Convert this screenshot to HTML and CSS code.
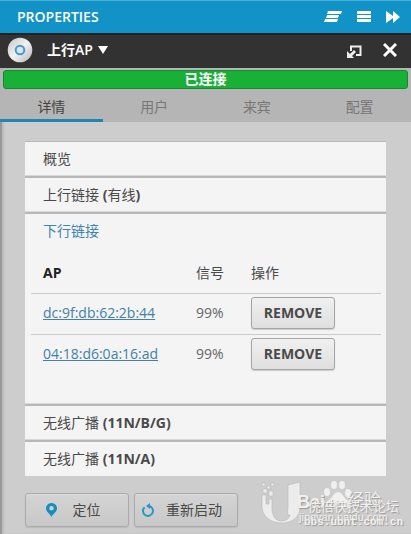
FILE: index.html
```html
<!DOCTYPE html>
<html lang="zh-CN">
<head>
  <meta charset="UTF-8">
  <meta name="viewport" content="width=device-width, initial-scale=1">
  <title>Properties</title>
  <link rel="stylesheet" href="styles.css">
</head>
<body>
  <header class="topbar">
    <h1>PROPERTIES</h1>
    <div class="tools">
      <button type="button" aria-label="Collapse">
        <svg width="18" height="12" viewBox="0 0 18 12"><path d="M4 0h14l-1 3H3zM3 4h12l-1 3H2zM1 8h13l-1 3H0z"/></svg>
      </button>
      <button type="button" aria-label="List">
        <svg width="14" height="12" viewBox="0 0 14 12"><path d="M0 0h14v3H0zM0 4h14v3H0zM0 8h14v3H0z"/></svg>
      </button>
      <button type="button" aria-label="Hide">
        <svg width="14" height="12" viewBox="0 0 14 12"><path d="M0 0l7 5V0l7 6-7 6V7l-7 5z"/></svg>
      </button>
    </div>
  </header>

  <div class="device">
    <svg class="device-icon" width="26" height="26" viewBox="0 0 26 26">
      <defs>
        <linearGradient id="disc" x1="0" y1="0" x2="1" y2="1">
          <stop offset="0" stop-color="#c4c4c4"/>
          <stop offset=".5" stop-color="#f2f2f2"/>
          <stop offset="1" stop-color="#b4b4b4"/>
        </linearGradient>
      </defs>
      <circle cx="13" cy="13" r="12.3" fill="url(#disc)"/>
      <circle cx="13" cy="13" r="4.300" fill="#d4e8f4" stroke="#4a98cc" stroke-width="2"/>
    </svg>
    <button type="button" class="device-name">上行AP
      <svg width="10" height="8" viewBox="0 0 10 8"><path d="M0 0h10L5 8z"/></svg>
    </button>
    <div class="window-tools">
      <button type="button" aria-label="Detach">
        <svg width="15" height="18" viewBox="0 0 15 18"><path d="M4 10V5.500h9.500v8.500H9" fill="none" stroke="#eee" stroke-width="2"/><path d="M0 10v7h7l-2-2 4-4-2-2-4 4z" fill="#eee"/></svg>
      </button>
      <button type="button" aria-label="Close">
        <svg width="14" height="14" viewBox="0 0 14 14"><path d="M1 1l12 12M13 1L1 13" stroke="#fff" stroke-width="3"/></svg>
      </button>
    </div>
  </div>

  <main class="panel">
    <div class="panel-head">
      <div class="status">已连接</div>
      <nav class="tabs">
        <a href="#details" class="active">详情</a>
        <a href="#users">用户</a>
        <a href="#guests">来宾</a>
        <a href="#config">配置</a>
      </nav>
    </div>

    <div class="content">
      <div class="accordion">
        <section><button type="button" class="toggle">概览</button></section>
        <section><button type="button" class="toggle">上行链接 <b>(</b>有线<b>)</b></button></section>
        <section>
          <button type="button" class="toggle open">下行链接</button>
          <div class="downlinks">
            <table>
              <thead>
                <tr><th class="ap">AP</th><th class="signal">信号</th><th>操作</th></tr>
              </thead>
              <tbody>
                <tr>
                  <td><a href="#ap1">dc:9f:db:62:2b:44</a></td>
                  <td>99%</td>
                  <td><button type="button" class="remove">REMOVE</button></td>
                </tr>
                <tr>
                  <td><a href="#ap2">04:18:d6:0a:16:ad</a></td>
                  <td>99%</td>
                  <td><button type="button" class="remove">REMOVE</button></td>
                </tr>
              </tbody>
            </table>
          </div>
        </section>
        <section><button type="button" class="toggle">无线广播 <b>(11N/B/G)</b></button></section>
        <section><button type="button" class="toggle">无线广播 <b>(11N/A)</b></button></section>
      </div>

      <div class="actions">
        <button type="button">
          <svg width="11" height="14" viewBox="0 0 11 14"><path d="M5.500 0A5.300 5.300 0 0 0 0 5.300C0 9 4 11 5.500 14 7 11 11 9 11 5.300A5.300 5.300 0 0 0 5.500 0zm0 3a2.200 2.200 0 1 1 0 4.400 2.200 2.200 0 0 1 0-4.400z" fill="#178dbd" fill-rule="evenodd"/></svg>
          <span>定位</span>
        </button>
        <button type="button">
          <svg width="13" height="14" viewBox="0 0 13 14"><path d="M2.600 4.200A5 5 0 1 0 7 3" fill="none" stroke="#2d97c4" stroke-width="2"/><path d="M8 0v6L4 3z" fill="#2d97c4"/></svg>
          <span>重新启动</span>
        </button>
      </div>
    </div>
  </main>

  <div class="watermark">
    <svg width="128" height="44" viewBox="0 0 128 44">
      <g fill="#ececec" stroke="#b0b0b0" stroke-width=".5">
        <path d="M1 14h4v9h3v-5h3v9c0 7 3 13 9 13 5 0 8-2 9-6-4 1-2-5-2-8V4l12-3v25c0 10-8 16-18 16C8 42 1 34 1 25z"/>
        <path d="M1 2h3v3H1zM6 5h3v3H6zM10 2h3v3h-3zM2 8h4v4H2zM8 10h4v5H8z"/>
      </g>
      <g fill="#f0f0f0">
        <ellipse cx="66" cy="11" rx="3" ry="4"/>
        <ellipse cx="73" cy="4" rx="3" ry="4"/>
        <ellipse cx="81" cy="4" rx="3" ry="4"/>
        <ellipse cx="87" cy="12" rx="3" ry="4"/>
        <path d="M77 11c-4 0-5 5-9 8-4 4-2 9 3 9h13c5 0 6-5 2-9-4-3-5-8-9-8z"/>
      </g>
    </svg>
    <span class="brand">Bai<i>du</i></span>
    <span class="brand-cn">经验</span>
    <span class="brand-url">jingyan.baidu.com</span>
    <span class="forum">优倍快技术论坛</span>
    <span class="forum-url">bbs.ubnt.com.cn</span>
  </div>
</body>
</html>
```
FILE: styles.css
```css
* {
  box-sizing: border-box;
}

body {
  margin: 0;
  min-height: 100vh;
  display: flex;
  flex-direction: column;
  position: relative;
  overflow: hidden;
  font-family: "Open Sans", "Noto Sans CJK SC", sans-serif;
  font-size: 14px;
  line-height: 20px;
  color: #4a4a4a;
  background: #cdcdcd;
}

button {
  font: inherit;
  color: inherit;
  background: none;
  border: 0;
  padding: 0;
  cursor: pointer;
}

svg {
  display: block;
}

/* header */
.topbar {
  display: flex;
  align-items: center;
  justify-content: space-between;
  height: 33px;
  padding: 0 11px 0 17px;
  background: #1193c7;
  border-top: 1px solid #4ab0d8;
}

.topbar h1 {
  margin: 0;
  font-size: 14px;
  font-weight: 600;
  color: #fff;
}

.tools {
  display: flex;
  gap: 15px;
}

.tools svg {
  fill: #fff;
}

.device {
  display: flex;
  align-items: center;
  height: 35px;
  padding: 0 14px 4px 7px;
  background: #323232;
  border-top: 2px solid #222;
}

.device-name {
  display: flex;
  align-items: center;
  gap: 5px;
  margin-left: 14px;
  font-weight: 600;
  color: #fff;
}

.device-name svg {
  fill: #fff;
}

.window-tools {
  display: flex;
  align-items: center;
  gap: 21px;
  margin-left: auto;
}

/* panel */
.panel {
  flex: 1;
  border-left: 2px solid #999;
  box-shadow: inset 2px 0 2px #bbb;
}

.panel-head {
  margin-left: -2px;
  padding-top: 2px;
  background: #b5b5b5;
}

.status {
  height: 19px;
  margin: 0 3px;
  border: 1px solid #168b2f;
  border-radius: 3px;
  background: #18b037;
  color: #fff;
  font-weight: 600;
  line-height: 16px;
  text-align: center;
}

.tabs {
  display: grid;
  grid-template-columns: repeat(4, 1fr);
}

.tabs a {
  height: 33px;
  line-height: 35px;
  border-bottom: 3px solid transparent;
  text-align: center;
  text-decoration: none;
  color: #777;
}

.tabs .active {
  color: #444;
  border-color: #2385b5;
}

.content {
  padding: 19px 25px 6px 23px;
}

.accordion {
  display: flex;
  flex-direction: column;
  gap: 2px;
  background: #b8b8b8;
  border-top: 1px solid #b8b8b8;
}

.accordion section {
  background: #f4f4f4;
  box-shadow: inset 0 -1px 0 #d8d8d8;
}

.accordion section:last-child {
  box-shadow: none;
}

.toggle {
  display: block;
  width: 100%;
  height: 34px;
  padding: 0 18px;
  text-align: left;
}

.toggle b {
  font-weight: 700;
}

.toggle.open {
  color: #3d84b5;
}

.downlinks {
  padding: 7px 5px 29px 6px;
}

table {
  width: 100%;
  border-collapse: collapse;
  table-layout: fixed;
}

th, td {
  padding: 0;
  text-align: left;
  font-weight: 400;
}

th {
  height: 38px;
  padding-bottom: 2px;
}

td {
  height: 41px;
  padding-bottom: 2px;
  border-top: 1px solid #cacaca;
  color: #666;
}

th:first-child, td:first-child {
  padding-left: 12px;
}

.ap {
  width: 165px;
  font-weight: 700;
  color: #222;
}

.signal {
  width: 55px;
}

td a {
  color: #437fa9;
}

.remove {
  display: block;
  width: 84px;
  height: 32px;
  border: 1px solid #a5a5a5;
  border-radius: 3px;
  background: linear-gradient(#f0f0f0, #dfdfdf);
  box-shadow: 0 1px 1px #ccc;
  color: #4a4a4a;
  font-weight: 700;
}

.actions {
  display: flex;
  gap: 5px;
  margin-top: 17px;
}

.actions button {
  display: flex;
  align-items: center;
  justify-content: center;
  width: 104px;
  height: 34px;
  padding-right: 8px;
  border: 1px solid #aaa;
  border-radius: 3px;
  background: linear-gradient(#d4d4d4, #c8c8c8);
  box-shadow: inset 0 1px 0 #ddd, 0 1px 1px #bbb;
  gap: 11px;
}

.actions button:first-child {
  gap: 16px;
}

/* watermark over the lower right corner */
.watermark {
  position: absolute;
  right: 5px;
  bottom: 0;
  width: 145px;
  height: 53px;
  color: #f0f0f0;
  text-shadow: 1px 1px 1px #999;
  white-space: nowrap;
  pointer-events: none;
}

.watermark svg,
.watermark span {
  position: absolute;
}

.watermark svg {
  left: 0;
  top: 0;
  overflow: visible;
}

.brand {
  left: 36px;
  top: 11px;
  font-family: "Liberation Sans", sans-serif;
  font-size: 18px;
  font-weight: 700;
}

.brand i {
  font-style: normal;
  font-size: 13px;
}

.brand-cn {
  left: 86px;
  top: 9px;
  font-size: 17px;
}

.brand-url {
  left: 38px;
  top: 26px;
  font-family: "Liberation Sans", sans-serif;
  font-size: 11px;
}

.forum {
  left: 47px;
  top: 15px;
  font-size: 13px;
}

.forum-url {
  left: 43px;
  top: 31px;
  font-family: "Liberation Mono", monospace;
  font-size: 11px;
  font-weight: 700;
}
```
